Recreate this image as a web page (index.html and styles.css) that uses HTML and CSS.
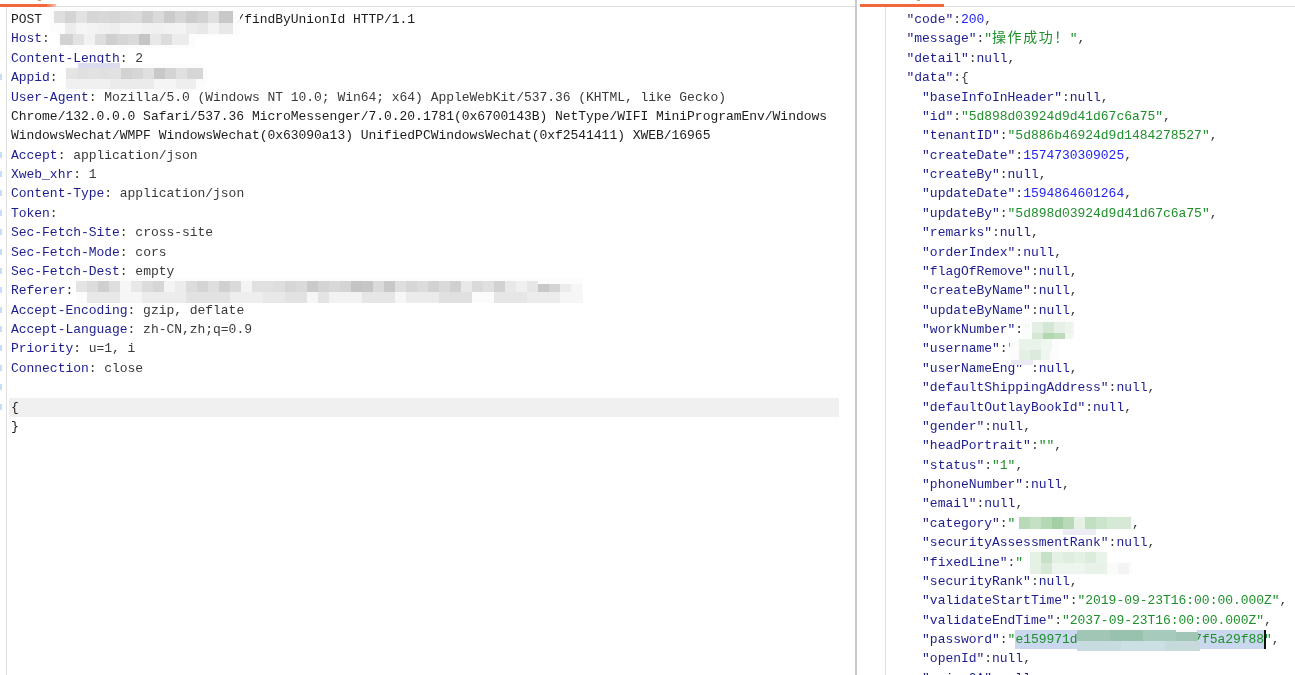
FILE: index.html
```html
<!DOCTYPE html>
<html lang="en">
<head>
<meta charset="utf-8">
<title>Request and response</title>
<link rel="stylesheet" href="styles.css">
</head>
<body>
<div class="app">
  <section class="pane pane-req">
    <div class="tabbar"><span class="tab tab-req"></span></div>
    <div class="editor">
      <div class="gutter gutter-req"></div>
      <div class="code code-req">
<div class="ln"><span class="t">POST                         /findByUnionId HTTP/1.1</span></div>
<div class="ln"><span class="k">Host</span><span class="p">:</span></div>
<div class="ln"><span class="k">Content-Length</span><span class="p">: 2</span></div>
<div class="ln mark"><span class="k">Appid</span><span class="p">:</span></div>
<div class="ln"><span class="k">User-Agent</span><span class="p">: Mozilla/5.0 (Windows NT 10.0; Win64; x64) AppleWebKit/537.36 (KHTML, like Gecko)</span></div>
<div class="ln"><span class="t">Chrome/132.0.0.0 Safari/537.36 MicroMessenger/7.0.20.1781(0x6700143B) NetType/WIFI MiniProgramEnv/Windows</span></div>
<div class="ln"><span class="t">WindowsWechat/WMPF WindowsWechat(0x63090a13) UnifiedPCWindowsWechat(0xf2541411) XWEB/16965</span></div>
<div class="ln mark"><span class="k">Accept</span><span class="p">: application/json</span></div>
<div class="ln mark"><span class="k">Xweb_xhr</span><span class="p">: 1</span></div>
<div class="ln mark"><span class="k">Content-Type</span><span class="p">: application/json</span></div>
<div class="ln mark"><span class="k">Token</span><span class="p">:</span></div>
<div class="ln mark"><span class="k">Sec-Fetch-Site</span><span class="p">: cross-site</span></div>
<div class="ln mark"><span class="k">Sec-Fetch-Mode</span><span class="p">: cors</span></div>
<div class="ln mark"><span class="k">Sec-Fetch-Dest</span><span class="p">: empty</span></div>
<div class="ln mark"><span class="k">Referer</span><span class="p">:</span></div>
<div class="ln mark"><span class="k">Accept-Encoding</span><span class="p">: gzip, deflate</span></div>
<div class="ln mark"><span class="k">Accept-Language</span><span class="p">: zh-CN,zh;q=0.9</span></div>
<div class="ln mark"><span class="k">Priority</span><span class="p">: u=1, i</span></div>
<div class="ln mark"><span class="k">Connection</span><span class="p">: close</span></div>
<div class="ln mark"> </div>
<div class="ln mark cur"><span class="t">{</span></div>
<div class="ln"><span class="t">}</span></div>
      </div>
    </div>
  </section>
  <div class="split"></div>
  <section class="pane pane-res">
    <div class="tabbar"><span class="tab tab-res"></span></div>
    <div class="editor">
      <div class="gutter gutter-res"></div>
      <div class="code code-res">
<div class="ln">  <span class="k">"code"</span><span class="p">:</span><span class="n">200</span><span class="p">,</span></div>
<div class="ln">  <span class="k">"message"</span><span class="p">:</span><span class="s">"<span class="cjk">操作成功！</span>"</span><span class="p">,</span></div>
<div class="ln">  <span class="k">"detail"</span><span class="p">:</span><span class="k">null</span><span class="p">,</span></div>
<div class="ln">  <span class="k">"data"</span><span class="p">:{</span></div>
<div class="ln">    <span class="k">"baseInfoInHeader"</span><span class="p">:</span><span class="k">null</span><span class="p">,</span></div>
<div class="ln">    <span class="k">"id"</span><span class="p">:</span><span class="s">"5d898d03924d9d41d67c6a75"</span><span class="p">,</span></div>
<div class="ln">    <span class="k">"tenantID"</span><span class="p">:</span><span class="s">"5d886b46924d9d1484278527"</span><span class="p">,</span></div>
<div class="ln">    <span class="k">"createDate"</span><span class="p">:</span><span class="n">1574730309025</span><span class="p">,</span></div>
<div class="ln">    <span class="k">"createBy"</span><span class="p">:</span><span class="k">null</span><span class="p">,</span></div>
<div class="ln">    <span class="k">"updateDate"</span><span class="p">:</span><span class="n">1594864601264</span><span class="p">,</span></div>
<div class="ln">    <span class="k">"updateBy"</span><span class="p">:</span><span class="s">"5d898d03924d9d41d67c6a75"</span><span class="p">,</span></div>
<div class="ln">    <span class="k">"remarks"</span><span class="p">:</span><span class="k">null</span><span class="p">,</span></div>
<div class="ln">    <span class="k">"orderIndex"</span><span class="p">:</span><span class="k">null</span><span class="p">,</span></div>
<div class="ln">    <span class="k">"flagOfRemove"</span><span class="p">:</span><span class="k">null</span><span class="p">,</span></div>
<div class="ln">    <span class="k">"createByName"</span><span class="p">:</span><span class="k">null</span><span class="p">,</span></div>
<div class="ln">    <span class="k">"updateByName"</span><span class="p">:</span><span class="k">null</span><span class="p">,</span></div>
<div class="ln">    <span class="k">"workNumber"</span><span class="p">:</span><span class="s">"     </span><span class="p">,</span></div>
<div class="ln">    <span class="k">"username"</span><span class="p">:</span><span class="s">"   "</span><span class="p">,</span></div>
<div class="ln">    <span class="k">"userNameEng"</span><span class="p"> :</span><span class="k">null</span><span class="p">,</span></div>
<div class="ln">    <span class="k">"defaultShippingAddress"</span><span class="p">:</span><span class="k">null</span><span class="p">,</span></div>
<div class="ln">    <span class="k">"defaultOutlayBookId"</span><span class="p">:</span><span class="k">null</span><span class="p">,</span></div>
<div class="ln">    <span class="k">"gender"</span><span class="p">:</span><span class="k">null</span><span class="p">,</span></div>
<div class="ln">    <span class="k">"headPortrait"</span><span class="p">:</span><span class="s">""</span><span class="p">,</span></div>
<div class="ln">    <span class="k">"status"</span><span class="p">:</span><span class="s">"1"</span><span class="p">,</span></div>
<div class="ln">    <span class="k">"phoneNumber"</span><span class="p">:</span><span class="k">null</span><span class="p">,</span></div>
<div class="ln">    <span class="k">"email"</span><span class="p">:</span><span class="k">null</span><span class="p">,</span></div>
<div class="ln">    <span class="k">"category"</span><span class="p">:</span><span class="s">"               </span><span class="p">,</span></div>
<div class="ln">    <span class="k">"securityAssessmentRank"</span><span class="p">:</span><span class="k">null</span><span class="p">,</span></div>
<div class="ln">    <span class="k">"fixedLine"</span><span class="p">:</span><span class="s">"</span></div>
<div class="ln">    <span class="k">"securityRank"</span><span class="p">:</span><span class="k">null</span><span class="p">,</span></div>
<div class="ln">    <span class="k">"validateStartTime"</span><span class="p">:</span><span class="s">"2019-09-23T16:00:00.000Z"</span><span class="p">,</span></div>
<div class="ln">    <span class="k">"validateEndTime"</span><span class="p">:</span><span class="s">"2037-09-23T16:00:00.000Z"</span><span class="p">,</span></div>
<div class="ln">    <span class="k">"password"</span><span class="p">:</span><span class="s">"<span class="sel">e159971d               7f5a29f88</span>"</span><span class="p">,</span></div>
<div class="ln">    <span class="k">"openId"</span><span class="p">:</span><span class="k">null</span><span class="p">,</span></div>
<div class="ln">    <span class="k">"unionOA"</span><span class="p">:</span><span class="k">null</span><span class="p">,</span></div>
      </div>
    </div>
  </section>
</div>
<svg class="mosaic" width="1295" height="675" viewBox="0 0 1295 675" aria-hidden="true" shape-rendering="crispEdges">
  <path class="wash" d="M50 7h190v27l-10 2H196v12H70l-12-6v-8l-8-2zM68 64h137v4h2v16l-8 7H80l-15-5V68zM76 278h507v25H76zM1023 318h52v21h-15v24h-26l-24-4v-19h13zM1018 516h114v15H1018zM1027 550h72v12h33v13h-92l-13-6zM1077 628h120v8l3 8-3 8H1085l-8-5z"/>
  <g>
    <rect x="54" y="11" width="11" height="12" fill="#dedede"/><rect x="65" y="11" width="11" height="12" fill="#d4d4d4"/><rect x="76" y="11" width="11" height="12" fill="#e2e2e2"/><rect x="87" y="11" width="11" height="12" fill="#d6d6d6"/><rect x="98" y="11" width="11" height="12" fill="#d8d8d8"/><rect x="109" y="11" width="11" height="12" fill="#d6d6d6"/><rect x="120" y="11" width="11" height="12" fill="#d9d9d9"/><rect x="131" y="11" width="11" height="12" fill="#dbdbdb"/><rect x="142" y="11" width="11" height="12" fill="#cfcfcf"/><rect x="153" y="11" width="11" height="12" fill="#dadada"/><rect x="164" y="11" width="11" height="12" fill="#cbcbcb"/><rect x="175" y="11" width="11" height="12" fill="#d6d6d6"/><rect x="186" y="11" width="11" height="12" fill="#cccccc"/><rect x="197" y="11" width="11" height="12" fill="#d2d2d2"/><rect x="208" y="11" width="11" height="12" fill="#e0e0e0"/><rect x="219" y="11" width="14" height="12" fill="#c8c8c8"/>
    <rect x="65" y="23" width="11" height="11" fill="#ececec"/><rect x="76" y="23" width="11" height="11" fill="#f5f5f5"/><rect x="87" y="23" width="11" height="11" fill="#f3f3f3"/><rect x="98" y="23" width="11" height="11" fill="#f0f0f0"/><rect x="109" y="23" width="11" height="11" fill="#eeeeee"/><rect x="120" y="23" width="11" height="11" fill="#f4f4f4"/><rect x="131" y="23" width="11" height="11" fill="#f4f4f4"/><rect x="142" y="23" width="11" height="11" fill="#f1f1f1"/><rect x="153" y="23" width="11" height="11" fill="#f0f0f0"/><rect x="164" y="23" width="11" height="11" fill="#f2f2f2"/><rect x="175" y="23" width="11" height="11" fill="#f3f3f3"/><rect x="186" y="23" width="11" height="11" fill="#ececec"/><rect x="197" y="23" width="11" height="11" fill="#e8e8e8"/><rect x="208" y="23" width="11" height="11" fill="#f3f3f3"/><rect x="219" y="23" width="14" height="11" fill="#e8e8e8"/>
    <rect x="60" y="34" width="13" height="11" fill="#d2d2d2"/><rect x="73" y="34" width="11" height="11" fill="#e2e2e2"/><rect x="84" y="34" width="11" height="11" fill="#f2f2f2"/><rect x="95" y="34" width="11" height="11" fill="#dedede"/><rect x="106" y="34" width="11" height="11" fill="#cfcfcf"/><rect x="117" y="34" width="11" height="11" fill="#d6d6d6"/><rect x="128" y="34" width="11" height="11" fill="#dadada"/><rect x="139" y="34" width="11" height="11" fill="#c5c5c5"/><rect x="150" y="34" width="11" height="11" fill="#e8e8e8"/><rect x="161" y="34" width="11" height="11" fill="#dcdcdc"/><rect x="172" y="34" width="17" height="11" fill="#ececec"/>
    <rect x="78" y="63" width="42" height="5" fill="#dcdcf0"/>
    <rect x="66" y="68" width="11" height="11" fill="#e4e4e4"/><rect x="77" y="68" width="11" height="11" fill="#e0e0e0"/><rect x="88" y="68" width="11" height="11" fill="#e2e2e2"/><rect x="99" y="68" width="11" height="11" fill="#e0e0e0"/><rect x="110" y="68" width="11" height="11" fill="#e2e2e2"/><rect x="121" y="68" width="11" height="11" fill="#d2d2d2"/><rect x="132" y="68" width="11" height="11" fill="#d6d6d6"/><rect x="143" y="68" width="11" height="11" fill="#e0e0e0"/><rect x="154" y="68" width="11" height="11" fill="#c8c8c8"/><rect x="165" y="68" width="11" height="11" fill="#d4d4d4"/><rect x="176" y="68" width="11" height="11" fill="#e0e0e0"/><rect x="187" y="68" width="16" height="11" fill="#d6d6d6"/>
    <rect x="66" y="79" width="44" height="10" fill="#f0f0f0"/><rect x="110" y="79" width="44" height="10" fill="#ebebeb"/><rect x="154" y="79" width="22" height="10" fill="#f5f5f5"/><rect x="176" y="79" width="20" height="10" fill="#eeeeee"/>
    <rect x="76" y="281" width="11" height="11" fill="#e4e4e4"/><rect x="87" y="281" width="11" height="11" fill="#dcdcdc"/><rect x="98" y="281" width="11" height="11" fill="#cfcfcf"/><rect x="109" y="281" width="11" height="11" fill="#dedede"/><rect x="120" y="281" width="11" height="11" fill="#f6f6f6"/><rect x="131" y="281" width="11" height="11" fill="#e8e8e8"/><rect x="142" y="281" width="11" height="11" fill="#dcdcdc"/><rect x="153" y="281" width="11" height="11" fill="#d6d6d6"/><rect x="164" y="281" width="11" height="11" fill="#f4f4f4"/><rect x="175" y="281" width="11" height="11" fill="#ececec"/><rect x="186" y="281" width="11" height="11" fill="#dcdcdc"/><rect x="197" y="281" width="11" height="11" fill="#d4d4d4"/><rect x="208" y="281" width="11" height="11" fill="#dedede"/><rect x="219" y="281" width="11" height="11" fill="#d0d0d0"/><rect x="230" y="281" width="11" height="11" fill="#dadada"/><rect x="241" y="281" width="11" height="11" fill="#f4f4f4"/><rect x="252" y="281" width="11" height="11" fill="#e0e0e0"/><rect x="263" y="281" width="11" height="11" fill="#e0e0e0"/><rect x="274" y="281" width="11" height="11" fill="#dedede"/><rect x="285" y="281" width="11" height="11" fill="#d6d6d6"/><rect x="296" y="281" width="11" height="11" fill="#dadada"/><rect x="307" y="281" width="11" height="11" fill="#cacaca"/><rect x="318" y="281" width="11" height="11" fill="#d4d4d4"/><rect x="329" y="281" width="11" height="11" fill="#d8d8d8"/><rect x="340" y="281" width="11" height="11" fill="#d4d4d4"/><rect x="351" y="281" width="11" height="11" fill="#c4c4c4"/><rect x="362" y="281" width="11" height="11" fill="#c6c6c6"/><rect x="373" y="281" width="11" height="11" fill="#dadada"/><rect x="384" y="281" width="11" height="11" fill="#c8c8c8"/><rect x="395" y="281" width="11" height="11" fill="#dedede"/><rect x="406" y="281" width="11" height="11" fill="#d6d6d6"/><rect x="417" y="281" width="11" height="11" fill="#dcdcdc"/><rect x="428" y="281" width="11" height="11" fill="#d2d2d2"/><rect x="439" y="281" width="11" height="11" fill="#dadada"/><rect x="450" y="281" width="11" height="11" fill="#d0d0d0"/><rect x="461" y="281" width="11" height="11" fill="#e8e8e8"/><rect x="472" y="281" width="11" height="11" fill="#dadada"/><rect x="483" y="281" width="11" height="11" fill="#e0e0e0"/><rect x="494" y="281" width="11" height="11" fill="#d2d2d2"/><rect x="505" y="281" width="11" height="11" fill="#e8e8e8"/><rect x="516" y="281" width="11" height="11" fill="#f0f0f0"/><rect x="527" y="281" width="11" height="11" fill="#e6e6e6"/><rect x="538" y="284" width="11" height="8" fill="#c8c8c8"/><rect x="549" y="284" width="11" height="8" fill="#d4d4d4"/><rect x="560" y="284" width="11" height="8" fill="#ececec"/><rect x="571" y="284" width="11" height="8" fill="#f6f6f6"/>
    <rect x="87" y="292" width="33" height="11" fill="#e8e8e8"/><rect x="120" y="292" width="22" height="11" fill="#f6f6f6"/><rect x="142" y="292" width="44" height="11" fill="#ececec"/><rect x="186" y="292" width="44" height="11" fill="#e2e2e2"/><rect x="230" y="292" width="33" height="11" fill="#eeeeee"/><rect x="263" y="292" width="22" height="11" fill="#e8e8e8"/><rect x="285" y="292" width="22" height="11" fill="#e2e2e2"/><rect x="307" y="292" width="11" height="11" fill="#f6f6f6"/><rect x="318" y="292" width="11" height="11" fill="#e4e4e4"/><rect x="329" y="292" width="33" height="11" fill="#f2f2f2"/><rect x="362" y="292" width="33" height="11" fill="#e6e6e6"/><rect x="395" y="292" width="11" height="11" fill="#f6f6f6"/><rect x="406" y="292" width="33" height="11" fill="#ebebeb"/><rect x="439" y="292" width="33" height="11" fill="#e0e0e0"/><rect x="472" y="292" width="22" height="11" fill="#fbfbfb"/><rect x="494" y="292" width="33" height="11" fill="#e6e6e6"/><rect x="527" y="292" width="33" height="11" fill="#ececec"/><rect x="560" y="292" width="23" height="11" fill="#f6f6f6"/>
    <rect x="1032" y="322" width="11" height="11" fill="#e2efe2"/><rect x="1043" y="322" width="11" height="11" fill="#d4e6d4"/><rect x="1054" y="322" width="11" height="11" fill="#e6f0e6"/><rect x="1065" y="322" width="8" height="11" fill="#edf4ed"/>
    <rect x="1032" y="333" width="11" height="6" fill="#d4e8d4"/><rect x="1043" y="333" width="11" height="6" fill="#b2d8b2"/><rect x="1054" y="333" width="11" height="6" fill="#bcdcbc"/><rect x="1065" y="333" width="8" height="6" fill="#f0f6f0"/>
    <rect x="1019" y="339" width="22" height="11" fill="#eaf3ea"/><rect x="1041" y="339" width="11" height="11" fill="#f0f6f0"/>
    <rect x="1019" y="350" width="11" height="10" fill="#e4f0e4"/><rect x="1030" y="350" width="11" height="10" fill="#dceadc"/><rect x="1041" y="350" width="9" height="10" fill="#eff5ef"/>
    <rect x="1011" y="360" width="22" height="5" fill="#eaeaf4"/>
    <rect x="1019" y="517" width="11" height="12" fill="#b8dab8"/><rect x="1030" y="517" width="11" height="12" fill="#c6e0c6"/><rect x="1041" y="517" width="11" height="12" fill="#b4d8b4"/><rect x="1052" y="517" width="11" height="12" fill="#a4cfa4"/><rect x="1063" y="517" width="11" height="12" fill="#b8dab8"/><rect x="1074" y="517" width="11" height="12" fill="#e6f1e6"/><rect x="1085" y="517" width="11" height="12" fill="#c2dfc2"/><rect x="1096" y="517" width="11" height="12" fill="#cce4cc"/><rect x="1107" y="517" width="11" height="12" fill="#d6e9d6"/><rect x="1118" y="517" width="13" height="12" fill="#d6e9d6"/>
    <rect x="1063" y="529" width="33" height="6" fill="#ececf4"/>
    <rect x="1030" y="552" width="11" height="11" fill="#e6f1e6"/><rect x="1041" y="552" width="11" height="11" fill="#c6e1c6"/><rect x="1052" y="552" width="11" height="11" fill="#e6f1e6"/><rect x="1063" y="552" width="11" height="11" fill="#deedde"/><rect x="1074" y="552" width="11" height="11" fill="#e4f0e4"/><rect x="1085" y="552" width="11" height="11" fill="#dcecdc"/><rect x="1096" y="552" width="11" height="11" fill="#eaf3ea"/>
    <rect x="1030" y="563" width="11" height="11" fill="#e6f1e6"/><rect x="1041" y="563" width="11" height="11" fill="#d6e9d6"/><rect x="1052" y="563" width="33" height="11" fill="#eef5ee"/><rect x="1085" y="563" width="22" height="11" fill="#e8f2e8"/><rect x="1107" y="563" width="11" height="11" fill="#fafafa"/><rect x="1118" y="563" width="11" height="11" fill="#f4f4f4"/>
    <rect x="1077" y="630" width="33" height="11" fill="#a2c6b6"/><rect x="1110" y="630" width="33" height="11" fill="#98c2ae"/><rect x="1143" y="630" width="33" height="11" fill="#a6cabc"/><rect x="1176" y="632" width="22" height="9" fill="#a2c6b6"/>
    <rect x="1077" y="641" width="44" height="10" fill="#c8dce0"/><rect x="1121" y="641" width="44" height="10" fill="#cce0e4"/><rect x="1165" y="641" width="35" height="10" fill="#c6dadc"/>
  </g>
</svg>
</body>
</html>
```

FILE: styles.css
```css
* { box-sizing: border-box; }

html, body {
  margin: 0;
  padding: 0;
  height: 100%;
  overflow: hidden;
  background: #fff;
}

.app {
  display: flex;
  width: 1295px;
  height: 675px;
  overflow: hidden;
}

.pane {
  display: flex;
  flex-direction: column;
  min-width: 0;
}

.pane-req { width: 855px; }
.pane-res { flex: 1; padding-left: 3px; }

.split {
  width: 2px;
  background: #cbc7cb;
}

.tabbar {
  height: 7px;
  flex: none;
  border-bottom: 1px solid #dedede;
  display: flex;
  align-items: flex-end;
}

.tab {
  display: block;
  position: relative;
  height: 3px;
  margin-bottom: -1px;
  background: #f2683c;
}

.tab::before {
  content: "";
  position: absolute;
  top: -4px;
  width: 3px;
  height: 1px;
  background: #c9a35e;
}

.tab-req {
  width: 56px;
  background: linear-gradient(90deg, #f2683c 0 82%, #fbc3b0 100%);
}

.tab-req::before { left: 38px; }

.tab-res { width: 84px; }

.tab-res::before { left: 57px; }

.editor {
  flex: 1;
  display: flex;
  min-height: 0;
}

.gutter {
  flex: none;
  border-right: 1px solid #e0e0e0;
}

.gutter-req { width: 7px; }
.gutter-res { width: 26px; }

.code {
  flex: 1;
  min-width: 0;
  font-family: "Liberation Mono", "Noto Sans CJK SC", monospace;
  font-size: 13px;
  letter-spacing: -0.03px;
  line-height: 19.38px;
  filter: blur(0.3px);
}

.code-req { padding: 3px 16px 0 2px; }
.code-res { padding: 3px 0 0 5px; }

.ln {
  position: relative;
  height: 19.38px;
  white-space: pre;
}

.code-req .ln { padding-left: 2px; }

.mark::before {
  content: "";
  position: absolute;
  left: -9px;
  top: 6px;
  width: 2px;
  height: 6px;
  background: #c6def5;
}

.cur { background: #f0f0f0; }

.t { color: #1c1c1c; }
.k { color: #1d1d8f; }
.p { color: #3a3a3a; }
.n { color: #2525f0; }
.s { color: #1f8f2c; }

.cjk {
  font-family: "Noto Sans CJK SC", sans-serif;
  font-size: 14px;
  line-height: 1;
  letter-spacing: 1.54px;
}

.sel {
  background: #c9d8ee;
  display: inline-block;
  height: 19.38px;
  border-right: 2px solid #111;
  margin-right: -2px;
}

.mosaic {
  position: absolute;
  left: 0;
  top: 0;
  filter: blur(0.6px);
}

.wash { fill: #fcfcfc; opacity: 0.94; }
```
